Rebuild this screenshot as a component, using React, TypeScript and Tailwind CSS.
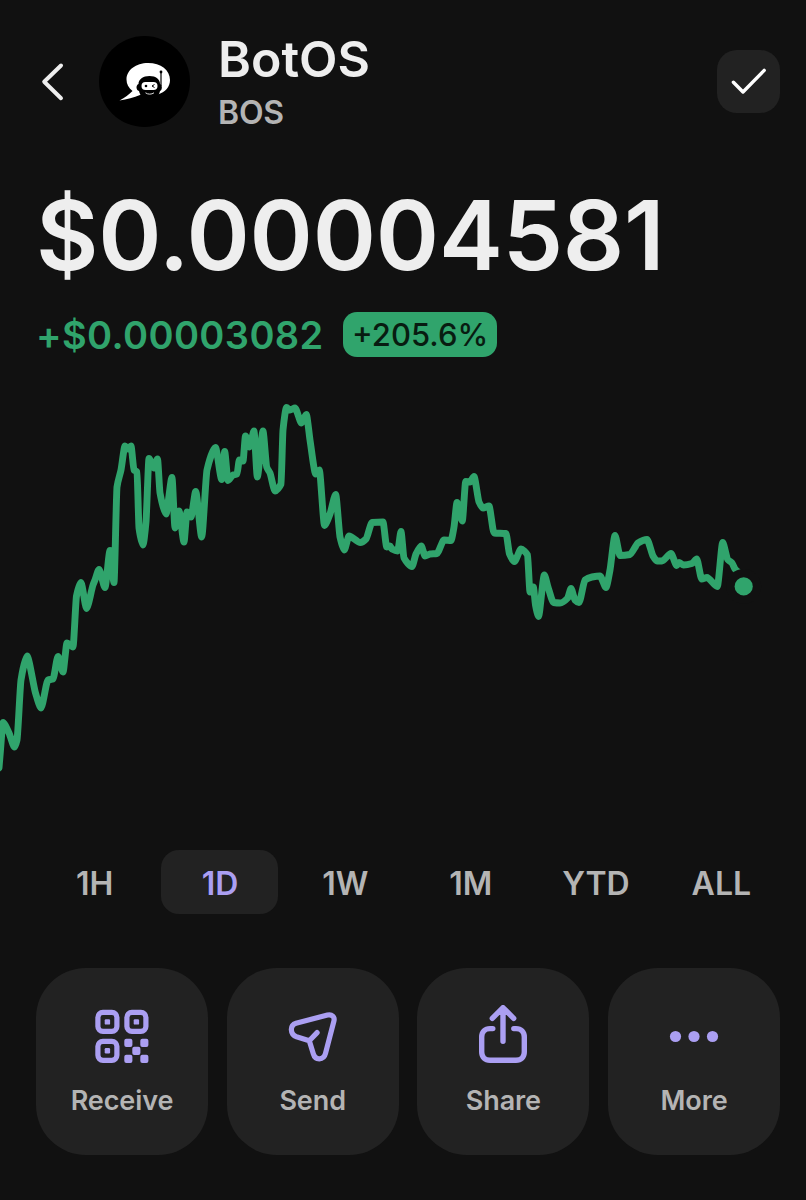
import React from "react";

type Point = [number, number];

const prices: Point[] = [
  [-1, 768], [0.5, 750], [3, 722.5], [9, 733], [14.5, 747], [17, 740], [21, 680], [27, 656], [35.5, 693], [41, 708], [48, 680], [53, 679],
  [58, 656.5], [63, 672], [67, 643], [73, 647], [76.5, 596], [81, 582.5], [86.5, 608.5], [93, 585], [95, 580],
  [99, 569.5], [105, 587.5], [110, 550.5], [114, 582.5], [117, 487], [121, 470], [125, 446], [128, 449],
  [131, 446], [134, 470], [137, 472], [139, 528], [143, 545], [146, 522], [149, 458.5], [154, 468],
  [157.5, 459], [160, 493], [166, 514], [172, 477.5], [175, 528], [179, 511], [184, 542], [187, 512],
  [191, 517], [195.7, 491.5], [201.7, 537], [207, 470], [215.5, 447.5], [221.7, 479.5], [224.7, 451.5],
  [228, 480.5], [233, 475], [237, 474], [239.3, 460], [243, 461], [245.5, 436], [249.5, 447], [254, 431],
  [257.3, 477], [263, 431], [266.7, 467], [270, 473], [275, 491], [281, 484], [283, 430], [286.5, 407.5],
  [290, 410], [295, 408], [301.5, 423], [306.3, 414.5], [310, 440], [315.7, 474], [319.3, 470],
  [324.5, 525.5], [330, 514], [335.7, 494.5], [340, 537], [344.3, 550], [349, 536], [360.3, 542.5],
  [366, 539], [372, 522.5], [383, 522], [386.7, 547], [390, 546], [392, 549], [397.7, 551],
  [401, 531.5], [404, 558], [412, 566.5], [416, 554], [421.3, 546], [425, 556], [430, 554], [437, 553.5],
  [444, 540], [451, 540.5], [454, 527], [457, 502.5], [462.3, 521], [465.7, 481.5], [470, 482],
  [474, 476.5], [479, 502], [483, 508], [489, 506], [494, 533], [506, 533.5], [509.5, 554],
  [514.5, 561.5], [521, 549], [527.5, 555], [530, 592], [533.3, 587], [535.5, 605], [538.5, 616.5],
  [544.3, 575], [548, 587], [553.5, 602.5], [560, 603], [567.7, 598], [571, 588.5], [575, 600],
  [579, 602.5], [585, 580], [592, 577], [600, 576], [606, 587.5], [610, 570], [615, 535.5],
  [620, 555.5], [630, 554.5], [638, 543], [647, 539.5], [653, 556], [657, 561], [662, 561],
  [671, 553.5], [676.7, 565.5], [679, 562.5], [683.5, 565], [692, 563.5], [696.7, 559], [701.7, 579],
  [707, 577.5], [717.3, 586.5], [722.7, 542.5], [727.7, 559.5], [732, 563], [735, 569], [739, 573], [743.7, 586.4],
];

// Monotone cubic interpolation, so that peaks and dips are never overshot.
// The short handles keep the runs between them nearly straight.
function monotonePath(points: Point[]): string {
  const slope = points.slice(1).map((p, i) => (p[1] - points[i][1]) / (p[0] - points[i][0]));
  const tangent = points.map((_, i) => {
    if (i === 0) return slope[0];
    if (i === points.length - 1) return slope[i - 1];
    const a = slope[i - 1];
    const b = slope[i];
    return a * b <= 0 ? 0 : (2 * a * b) / (a + b);
  });
  let d = `M${points[0][0]} ${points[0][1]}`;
  for (let i = 1; i < points.length; i++) {
    const [x0, y0] = points[i - 1];
    const [x1, y1] = points[i];
    const h = (x1 - x0) * 0.24;
    d += `C${x0 + h} ${y0 + h * tangent[i - 1]} ${x1 - h} ${y1 - h * tangent[i]} ${x1} ${y1}`;
  }
  return d;
}

function Logo() {
  return (
    <svg className="ml-[35px] size-[91px] shrink-0" viewBox="0 0 91 91">
      <circle cx="45.5" cy="45.5" r="45.5" fill="#000" />
      <path
        d="M20.5 64.5C26 61.5 30 58.5 33.5 55C29.5 52 27.5 48 27.5 43.5C27.5 34 37 27 49 27C62 27 71 34 71 44C71 51 66.5 56 58.5 58.5L51 56L41 59C35 61.5 28 63.5 20.5 64.5Z"
        fill="#fff"
      />
      <path d="M39.500 48C39.5 43.5 44 40 50.5 40C57 40 61 43.5 61 48C63.5 49 63.5 54 61 55C60 60 56 64 50.5 64C45 64 41 60 40 55C36.800 54 36.8 49 39.5 48Z" fill="#000" />
      <rect x="42.5" y="46" width="16" height="8" rx="4" fill="#fff" />
      <circle cx="47" cy="50" r="1.3" fill="#000" />
      <path d="M55.5 48.5L53 50L55.5 51.5" fill="none" stroke="#000" strokeWidth="1" />
      <path d="M46.5 56.8C49 58.6 52.5 58.6 55 56.8" fill="none" stroke="#ddd" strokeWidth="1" />
      <path d="M62 36V50" stroke="#000" strokeWidth="1.2" />
      <circle cx="62" cy="36" r="1.4" fill="#000" />
    </svg>
  );
}

function ReceiveIcon() {
  return (
    <svg className="h-[60px] w-[60px]" viewBox="0 0 60 60" fill="none">
      <g stroke="#ab9ff2" strokeWidth="5.2">
        <rect x="5.9" y="7.4" width="19" height="19" rx="5" />
        <rect x="34.9" y="7.4" width="19" height="19" rx="5" />
        <rect x="5.9" y="36.3" width="19" height="19" rx="5" />
      </g>
      <g fill="#ab9ff2">
        <rect x="12.7" y="14.2" width="5.4" height="5.4" rx="1.2" />
        <rect x="41.7" y="14.2" width="5.4" height="5.4" rx="1.2" />
        <rect x="12.7" y="43.1" width="5.4" height="5.4" rx="1.2" />
        <rect x="32.3" y="33.8" width="8.1" height="8.1" rx="2" />
        <rect x="48.3" y="33.8" width="8.1" height="8.1" rx="2" />
        <rect x="40.3" y="41.8" width="8.1" height="8.1" rx="2" />
        <rect x="32.3" y="49.8" width="8.1" height="8.1" rx="2" />
        <rect x="48.3" y="49.8" width="8.1" height="8.1" rx="2" />
      </g>
    </svg>
  );
}

function SendIcon() {
  return (
    <svg className="h-[60px] w-[60px]" viewBox="0 0 60 60" fill="none" stroke="#ab9ff2" strokeWidth="5.2" strokeLinecap="round" strokeLinejoin="round">
      <path d="M13 18.200L44.5 10.1C48.9 9 52 11.8 50.9 16.1L42.5 48.4C40.700 55.500 32.200 55.600 30.300 48.800L26.3 35.7L13.5 31.8C7 29.5 6.5 20.2 13 18.2ZM26.3 35.7L34.1 27.6" />
    </svg>
  );
}

function ShareIcon() {
  return (
    <svg className="h-[60px] w-[60px]" viewBox="0 0 60 60" fill="none" stroke="#ab9ff2" strokeWidth="5.4" strokeLinecap="round" strokeLinejoin="round">
      <path d="M30 36.3V2.7M19.3 13.3L30 2.7L40.7 13.3M19.8 23.6H17C12 23.6 8.7 27 8.7 32V47C8.7 52 12 55.3 17 55.3H43C48 55.3 51.3 52 51.3 47V32C51.3 27 48 23.6 43 23.6H40.8" />
    </svg>
  );
}

function MoreIcon() {
  return (
    <svg className="h-[60px] w-[60px]" viewBox="0 0 60 60" fill="#ab9ff2">
      <circle cx="11.5" cy="31.5" r="5.6" />
      <circle cx="30" cy="31.5" r="5.6" />
      <circle cx="48.5" cy="31.5" r="5.6" />
    </svg>
  );
}

const ranges = ["1H", "1D", "1W", "1M", "YTD", "ALL"];

const actions = [
  { label: "Receive", icon: <ReceiveIcon /> },
  { label: "Send", icon: <SendIcon /> },
  { label: "Share", icon: <ShareIcon /> },
  { label: "More", icon: <MoreIcon /> },
];

export default function App() {
  return (
    <main className="flex h-[1200px] w-[806px] flex-col overflow-hidden bg-[#111111] font-['Inter',sans-serif]">
      <header className="mt-[36px] flex h-[91px] shrink-0 items-center pr-[26px] pl-[40px]">
        <button aria-label="Back" className="shrink-0">
          <svg className="block h-[40px] w-[24px]" viewBox="0 0 24 40" fill="none" stroke="#eeeeee" strokeWidth="4" strokeLinecap="round" strokeLinejoin="round">
            <path d="M21 3.5L4.2 19.700L21 36.2" />
          </svg>
        </button>
        <Logo />
        <div className="ml-[28px] flex flex-col pt-[2px]">
          <h1 className="text-[50px] leading-[54px] font-semibold text-[#eeeeee]">BotOS</h1>
          <p className="mt-[7px] text-[32px] leading-[40px] font-semibold tracking-[-0.2px] text-[#b4b4b4]">BOS</p>
        </div>
        <button aria-label="Added" className="ml-auto flex size-[63px] items-center justify-center rounded-[20px] bg-[#222222]">
          <svg className="h-[30px] w-[38px]" viewBox="0 0 38 30" fill="none" stroke="#ffffff" strokeWidth="3.4" strokeLinecap="round" strokeLinejoin="round">
            <path d="M3.4 15.2L13 25L34.2 3.4" />
          </svg>
        </button>
      </header>

      <section className="shrink-0 pl-[36px]">
        <div className="mt-[48px] h-[120px] text-[96px] leading-[120px] font-semibold tracking-[-0.2px] whitespace-nowrap text-[#eeeeee]">$0.00004581</div>
        <div className="mt-[17px] flex h-[45px] items-center">
          <span className="pt-[2px] text-[38px] leading-[45px] font-semibold tracking-[0.4px] text-[#30a46c]">+$0.00003082</span>
          <span className="ml-[19px] flex h-[45px] w-[154px] items-center justify-center rounded-[14px] bg-[#30a46c] pt-[2px] pl-[1px] text-[31px] font-medium text-[#081c11]">
            +205.6%
          </span>
        </div>
      </section>

      <svg className="mt-[23px] h-[420px] w-[806px] shrink-0" viewBox="0 380 806 420" fill="none">
        <path d={monotonePath(prices)} stroke="#30a46c" strokeWidth="6.9" strokeLinecap="round" strokeLinejoin="round" />
        <circle cx="743.7" cy="586.4" r="17.5" fill="#111111" />
        <circle cx="743.7" cy="586.4" r="9.1" fill="#30a46c" />
      </svg>

      <nav className="mt-[50px] grid h-[64px] shrink-0 grid-cols-6 pr-[22px] pl-[32px]">
        {ranges.map((range) => (
          <button
            key={range}
            className={
              range === "1D"
                ? "mx-auto w-[117px] rounded-[18px] bg-[#222222] pt-[3px] text-[32px] font-semibold text-[#ab9ff2]"
                : "mx-auto w-[117px] rounded-[18px] pt-[3px] text-[32px] font-semibold text-[#b4b4b4]"
            }
          >
            {range}
          </button>
        ))}
      </nav>

      <section className="mt-[54px] grid h-[187px] shrink-0 grid-cols-4 gap-[18.7px] pr-[26px] pl-[36px]">
        {actions.map(({ label, icon }) => (
          <button key={label} className="flex flex-col items-center rounded-[50px] bg-[#222222] pt-[37px]">
            {icon}
            <span className="mt-[18px] text-[27px] leading-[36px] font-semibold tracking-[-0.1px] text-[#b4b4b4]">{label}</span>
          </button>
        ))}
      </section>
    </main>
  );
}
